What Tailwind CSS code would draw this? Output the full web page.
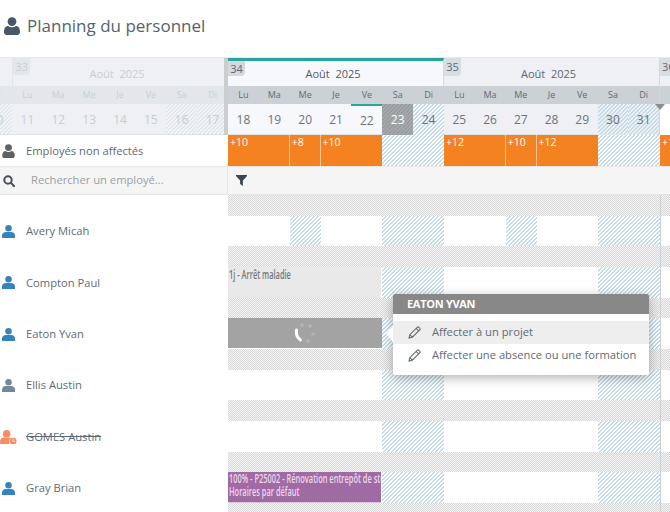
<!DOCTYPE html>
<html lang="fr">
<head>
  <meta charset="UTF-8">
  <title>Planning du personnel</title>
  <script src="https://cdn.jsdelivr.net/npm/@tailwindcss/browser@4"></script>
</head>
<body class="bg-white overflow-hidden font-['Open_Sans',sans-serif] text-[#5f6b75]">
  <div class="relative w-[670px] h-[512px] overflow-hidden">

    <!-- Title -->
    <div class="h-[57px] flex items-center pl-1 pb-[6px] gap-[7px]">
      <svg class="w-4 h-[18px] text-[#4a5766]" viewBox="0 0 16 18" fill="currentColor"><circle cx="8" cy="4.600" r="4.400"/><path d="M0 15c0-4 1.800-6 4.200-6 1 .8 2.300 1.200 3.800 1.200S10.800 9.800 11.800 9c2.400 0 4.200 2 4.200 6 0 2-1.200 3-2.800 3H2.800C1.200 18 0 17 0 15z"/></svg>
      <h1 class="text-[17px] leading-none text-[#56626f]">Planning du personnel</h1>
    </div>

    <!-- Calendar header -->
    <div class="flex h-[78px] border-t border-[#e6e8ea]">
      <div class="w-[224px] shrink-0 overflow-hidden bg-[#eef0f3] text-[#c9ced3]">
        <div class="flex h-[28px] border-l border-[#e2e5e8] ml-3">
          <span class="w-[17px] h-[17px] bg-[#e4e7ea] rounded-br text-[11px] leading-[17px] text-center">33</span>
          <span class="flex-1 text-center text-[11px] leading-[31px] pr-[20px]">Août&nbsp; 2025</span>
        </div>
        <div class="flex h-[18px] bg-[#e4e7ea] text-[9px] leading-[18px] text-center -ml-[19px]">
          <span class="w-[31px] shrink-0">Di</span><span class="w-[30.860px] shrink-0">Lu</span><span class="w-[30.860px] shrink-0">Ma</span><span class="w-[30.860px] shrink-0">Me</span><span class="w-[30.860px] shrink-0">Je</span><span class="w-[30.860px] shrink-0">Ve</span><span class="w-[30.860px] shrink-0">Sa</span><span class="w-[30.860px] shrink-0">Di</span>
        </div>
        <div class="flex h-[31px] text-[12px] leading-[31px] text-center -ml-[19px] border-b border-[#dfe2e5]">
          <span class="w-[31px] shrink-0 bg-[repeating-linear-gradient(135deg,#e2e7eb_0,#e2e7eb_1.200px,#f2f4f6_1.200px,#f2f4f6_2.828px)]">10</span><span class="w-[30.860px] shrink-0">11</span><span class="w-[30.860px] shrink-0">12</span><span class="w-[30.860px] shrink-0">13</span><span class="w-[30.860px] shrink-0">14</span><span class="w-[30.860px] shrink-0">15</span><span class="w-[30.860px] shrink-0 bg-[repeating-linear-gradient(135deg,#e2e7eb_0,#e2e7eb_1.200px,#f2f4f6_1.200px,#f2f4f6_2.828px)]">16</span><span class="w-[30.860px] shrink-0 bg-[repeating-linear-gradient(135deg,#e2e7eb_0,#e2e7eb_1.200px,#f2f4f6_1.200px,#f2f4f6_2.828px)]">17</span>
        </div>
      </div>
      <div class="w-1 shrink-0 bg-[#cbcdce]"></div>

      <!-- Week 34 -->
      <div class="w-[216px] shrink-0 bg-[#f7f8fb]">
        <div class="h-[28px] border-t-[3px] border-[#26a69a] flex border-r border-r-[#d5d9dd]">
          <span class="w-[17px] h-[15px] bg-[#d5d8dc] rounded-br text-[11px] leading-[15px] text-center">34</span>
          <span class="flex-1 text-center text-[11px] leading-[26px] pr-[22px] text-[#4f5b66]">Août&nbsp; 2025</span>
        </div>
        <div class="grid grid-cols-7 h-[18px] bg-[#ccd1d5] text-[9px] leading-[18px] text-center">
          <span>Lu</span><span>Ma</span><span>Me</span><span>Je</span><span>Ve</span><span>Sa</span><span>Di</span>
        </div>
        <div class="grid grid-cols-7 h-[31px] text-[12px] leading-[31px] text-center border-b border-[#dfe2e5] text-[#6a747d]">
          <span>18</span><span>19</span><span>20</span><span>21</span>
          <span class="border-t-2 border-[#26a69a] leading-[29px]">22</span>
          <span class="text-white bg-[repeating-linear-gradient(135deg,#9a9da0_0,#9a9da0_1.200px,#a6a9ac_1.200px,#a6a9ac_2.828px)]">23</span>
          <span class="bg-[repeating-linear-gradient(135deg,#c5dbe8_0,#c5dbe8_1.200px,#f7f8fb_1.200px,#f7f8fb_2.828px)]">24</span>
        </div>
      </div>

      <!-- Week 35 -->
      <div class="w-[216px] shrink-0 bg-[#eef0f4] border-r border-[#d5d9dd]">
        <div class="h-[28px] flex">
          <span class="w-[17px] h-[18px] bg-[#d9dce0] rounded-br text-[11px] leading-[18px] text-center">35</span>
          <span class="flex-1 text-center text-[11px] leading-[32px] pr-[23px] text-[#5c6772]">Août&nbsp; 2025</span>
        </div>
        <div class="grid grid-cols-7 h-[18px] bg-[#ccd1d5] text-[9px] leading-[18px] text-center">
          <span>Lu</span><span>Ma</span><span>Me</span><span>Je</span><span>Ve</span><span>Sa</span><span>Di</span>
        </div>
        <div class="grid grid-cols-7 h-[31px] text-[12px] leading-[31px] text-center border-b border-[#dfe2e5] text-[#6a747d]">
          <span>25</span><span>26</span><span>27</span><span>28</span><span>29</span>
          <span class="bg-[repeating-linear-gradient(135deg,#c5dbe8_0,#c5dbe8_1.200px,#eef0f4_1.200px,#eef0f4_2.828px)]">30</span>
          <span class="bg-[repeating-linear-gradient(135deg,#c5dbe8_0,#c5dbe8_1.200px,#eef0f4_1.200px,#eef0f4_2.828px)]">31</span>
        </div>
      </div>

      <!-- Week 36 -->
      <div class="flex-1 bg-white overflow-hidden">
        <div class="h-[28px] bg-[#eef0f4]"><span class="block w-[17px] h-[18px] bg-[#d9dce0] text-[11px] leading-[18px] pl-[2px]">36</span></div>
        <div class="h-[18px] bg-[#ccd1d5]"></div>
      </div>
    </div>

    <!-- Non assigned row -->
    <div class="flex h-[31px]">
      <div class="w-[228px] shrink-0 flex items-center pt-[1px] pl-[2px] gap-[11px] text-[11.200px]">
        <svg class="w-[13px] h-[14px] text-[#5b6268]" viewBox="0 0 16 18" fill="currentColor"><circle cx="8" cy="4.600" r="4.400"/><path d="M0 15c0-4 1.800-6 4.200-6 1 .8 2.300 1.200 3.800 1.200S10.800 9.800 11.800 9c2.400 0 4.200 2 4.200 6 0 2-1.200 3-2.800 3H2.800C1.200 18 0 17 0 15z"/></svg>
        <span>Employés non affectés</span>
      </div>
      <div class="grid grid-cols-[repeat(14,30.860px)_10px] flex-1 text-white text-[10.500px] leading-[15px]">
        <span class="col-span-2 bg-[#f58220] pl-[2px] border-r border-[#fbc596]">+10</span>
        <span class="bg-[#f58220] pl-[2px] border-r border-[#fbc596]">+8</span>
        <span class="col-span-2 bg-[#f58220] pl-[2px]">+10</span>
        <span class="col-span-2 bg-[repeating-linear-gradient(135deg,#c5dbe8_0,#c5dbe8_1.200px,#fff_1.200px,#fff_2.828px)]"></span>
        <span class="col-span-2 bg-[#f58220] pl-[2px] border-r border-[#fbc596]">+12</span>
        <span class="bg-[#f58220] pl-[2px] border-r border-[#fbc596]">+10</span>
        <span class="col-span-2 bg-[#f58220] pl-[2px]">+12</span>
        <span class="col-span-2 bg-[repeating-linear-gradient(135deg,#c5dbe8_0,#c5dbe8_1.200px,#fff_1.200px,#fff_2.828px)]"></span>
        <span class="bg-[#f58220] pl-[2px] overflow-hidden">+12</span>
      </div>
    </div>

    <!-- Toolbar -->
    <div class="flex h-[29px] bg-[#f5f5f5] border-y border-[#e6e6e6]">
      <div class="w-[228px] shrink-0 flex items-center pl-[3px] gap-[16px] border-r border-[#e6e6e6] text-[11.200px] text-[#9a9fa4]">
        <svg class="w-3 h-3 text-[#4a5058]" viewBox="0 0 12 12" fill="none" stroke="currentColor" stroke-width="2"><circle cx="5" cy="5" r="3.700"/><path d="M8 8l3.200 3.200" stroke-linecap="round"/></svg>
        <span>Rechercher un employé...</span>
      </div>
      <div class="flex items-center pl-2">
        <svg class="w-[11px] h-[11px] text-[#3f464d]" viewBox="0 0 12 12" fill="currentColor"><path d="M0 0h12v1.200L7.500 6v6L4.500 9.800V6L0 1.200z"/></svg>
      </div>
    </div>

    <!-- Employee rows -->
    <div class="flex flex-col">

      <div class="flex h-[51.330px]">
        <div class="w-[228px] shrink-0 flex items-center pt-[22px] pl-[2px] gap-[11px] text-[11.200px]">
          <svg class="w-[13px] h-[13px] text-[#3582c1]" viewBox="0 0 16 16" fill="currentColor"><circle cx="8" cy="4" r="4"/><path d="M0 16v-3c0-3 2-4.500 5-4.500h6c3 0 5 1.500 5 4.500v3z"/></svg>
          <span>Avery Micah</span>
        </div>
        <div class="flex-1 flex flex-col">
          <div class="flex-1 bg-[repeating-linear-gradient(135deg,#d8d8d8_0,#d8d8d8_.707px,#f4f4f4_.707px,#f4f4f4_1.414px)]"></div>
          <div class="grid grid-cols-[repeat(14,30.860px)_10px] h-[30.500px]">
            <span class="col-span-2"></span>
            <span class="bg-[repeating-linear-gradient(135deg,#c5dbe8_0,#c5dbe8_1.200px,#fff_1.200px,#fff_2.828px)]"></span>
            <span class="col-span-2"></span>
            <span class="col-span-2 bg-[repeating-linear-gradient(135deg,#c5dbe8_0,#c5dbe8_1.200px,#fff_1.200px,#fff_2.828px)]"></span>
            <span class="col-span-2"></span>
            <span class="bg-[repeating-linear-gradient(135deg,#c5dbe8_0,#c5dbe8_1.200px,#fff_1.200px,#fff_2.828px)]"></span>
            <span class="col-span-2"></span>
            <span class="col-span-2 bg-[repeating-linear-gradient(135deg,#c5dbe8_0,#c5dbe8_1.200px,#fff_1.200px,#fff_2.828px)]"></span>
          </div>
        </div>
      </div>

      <div class="flex h-[51.330px]">
        <div class="w-[228px] shrink-0 flex items-center pt-[22px] pl-[2px] gap-[11px] text-[11.200px]">
          <svg class="w-[13px] h-[13px] text-[#3582c1]" viewBox="0 0 16 16" fill="currentColor"><circle cx="8" cy="4" r="4"/><path d="M0 16v-3c0-3 2-4.500 5-4.500h6c3 0 5 1.500 5 4.500v3z"/></svg>
          <span>Compton Paul</span>
        </div>
        <div class="flex-1 flex flex-col">
          <div class="flex-1 bg-[repeating-linear-gradient(135deg,#d8d8d8_0,#d8d8d8_.707px,#f4f4f4_.707px,#f4f4f4_1.414px)]"></div>
          <div class="grid grid-cols-[repeat(14,30.860px)_10px] h-[30.500px]">
            <span class="col-span-5 flex items-start bg-[#e9e9e9] mr-[1px] pl-[1px] overflow-hidden whitespace-nowrap"><span class="origin-left scale-x-[.62] text-[12px] leading-[15px] font-semibold text-[#73787c]">1j - Arrêt maladie</span></span>
            <span class="col-span-2 bg-[repeating-linear-gradient(135deg,#c5dbe8_0,#c5dbe8_1.200px,#fff_1.200px,#fff_2.828px)]"></span>
            <span class="col-span-5"></span>
            <span class="col-span-2 bg-[repeating-linear-gradient(135deg,#c5dbe8_0,#c5dbe8_1.200px,#fff_1.200px,#fff_2.828px)]"></span>
          </div>
        </div>
      </div>

      <div class="flex h-[51.330px]">
        <div class="w-[228px] shrink-0 flex items-center pt-[22px] pl-[2px] gap-[11px] text-[11.200px]">
          <svg class="w-[13px] h-[13px] text-[#3582c1]" viewBox="0 0 16 16" fill="currentColor"><circle cx="8" cy="4" r="4"/><path d="M0 16v-3c0-3 2-4.500 5-4.500h6c3 0 5 1.500 5 4.500v3z"/></svg>
          <span>Eaton Yvan</span>
        </div>
        <div class="flex-1 flex flex-col">
          <div class="flex-1 bg-[repeating-linear-gradient(135deg,#d8d8d8_0,#d8d8d8_.707px,#f4f4f4_.707px,#f4f4f4_1.414px)]"></div>
          <div class="grid grid-cols-[repeat(14,30.860px)_10px] h-[30.500px]">
            <span class="col-span-5 bg-[#a3a3a3] pr-[2px] border-b border-white flex items-center justify-center">
              <svg class="w-[24px] h-[24px]" viewBox="0 0 24 24">
                <path d="M4.500 9c-.5 3 0 5.500 1.500 7.500l2.500 2.500" fill="none" stroke="#fff" stroke-width="3" stroke-linecap="round"/>
                <circle cx="10" cy="4" r="1.800" fill="#b5b5b5"/><circle cx="18" cy="5" r="1.800" fill="#b5b5b5"/><circle cx="21" cy="13" r="1.800" fill="#b5b5b5"/><circle cx="16" cy="20" r="1.800" fill="#b5b5b5"/>
              </svg>
            </span>
            <span class="col-span-2 bg-[repeating-linear-gradient(135deg,#c5dbe8_0,#c5dbe8_1.200px,#fff_1.200px,#fff_2.828px)]"></span>
            <span class="col-span-5"></span>
            <span class="col-span-2 bg-[repeating-linear-gradient(135deg,#c5dbe8_0,#c5dbe8_1.200px,#fff_1.200px,#fff_2.828px)]"></span>
          </div>
        </div>
      </div>

      <div class="flex h-[51.330px]">
        <div class="w-[228px] shrink-0 flex items-center pt-[22px] pl-[2px] gap-[11px] text-[11.200px]">
          <svg class="w-[13px] h-[13px] text-[#76869b]" viewBox="0 0 16 16" fill="currentColor"><circle cx="8" cy="4" r="4"/><path d="M0 16v-3c0-3 2-4.500 5-4.500h6c3 0 5 1.500 5 4.500v3z"/></svg>
          <span>Ellis Austin</span>
        </div>
        <div class="flex-1 flex flex-col">
          <div class="flex-1 bg-[repeating-linear-gradient(135deg,#d8d8d8_0,#d8d8d8_.707px,#f4f4f4_.707px,#f4f4f4_1.414px)]"></div>
          <div class="grid grid-cols-[repeat(14,30.860px)_10px] h-[30.500px]">
            <span class="col-span-5"></span>
            <span class="col-span-2 bg-[repeating-linear-gradient(135deg,#c5dbe8_0,#c5dbe8_1.200px,#fff_1.200px,#fff_2.828px)]"></span>
            <span class="col-span-5"></span>
            <span class="col-span-2 bg-[repeating-linear-gradient(135deg,#c5dbe8_0,#c5dbe8_1.200px,#fff_1.200px,#fff_2.828px)]"></span>
          </div>
        </div>
      </div>

      <div class="flex h-[51.330px]">
        <div class="w-[228px] shrink-0 flex items-center pt-[22px] gap-[9px] text-[11.200px]">
          <svg class="w-[17px] h-[14px] text-[#fb8c62]" viewBox="0 0 18 15" fill="currentColor"><circle cx="7" cy="4" r="4"/><path d="M0 15v-3c0-2.500 1.800-4 4.500-4h5c1 0 1.800.2 2.500.6-1.500 1-2.500 2.700-2.500 4.400 0 .7.1 1.400.4 2z"/><circle cx="14" cy="12" r="3.600"/><path d="M14 10v2.200h1.800" stroke="#fff" fill="none" stroke-width="1"/></svg>
          <span class="line-through">GOMES Austin</span>
        </div>
        <div class="flex-1 flex flex-col">
          <div class="flex-1 bg-[repeating-linear-gradient(135deg,#d8d8d8_0,#d8d8d8_.707px,#f4f4f4_.707px,#f4f4f4_1.414px)]"></div>
          <div class="grid grid-cols-[repeat(14,30.860px)_10px] h-[30.500px]">
            <span class="col-span-5"></span>
            <span class="col-span-2 bg-[repeating-linear-gradient(135deg,#c5dbe8_0,#c5dbe8_1.200px,#fff_1.200px,#fff_2.828px)]"></span>
            <span class="col-span-5"></span>
            <span class="col-span-2 bg-[repeating-linear-gradient(135deg,#c5dbe8_0,#c5dbe8_1.200px,#fff_1.200px,#fff_2.828px)]"></span>
          </div>
        </div>
      </div>

      <div class="flex h-[51.330px]">
        <div class="w-[228px] shrink-0 flex items-center pt-[22px] pl-[2px] gap-[11px] text-[11.200px]">
          <svg class="w-[13px] h-[13px] text-[#3582c1]" viewBox="0 0 16 16" fill="currentColor"><circle cx="8" cy="4" r="4"/><path d="M0 16v-3c0-3 2-4.500 5-4.500h6c3 0 5 1.500 5 4.500v3z"/></svg>
          <span>Gray Brian</span>
        </div>
        <div class="flex-1 flex flex-col">
          <div class="flex-1 bg-[repeating-linear-gradient(135deg,#d8d8d8_0,#d8d8d8_.707px,#f4f4f4_.707px,#f4f4f4_1.414px)]"></div>
          <div class="grid grid-cols-[repeat(14,30.860px)_10px] h-[30.500px]">
            <span class="col-span-5 flex items-start bg-[#a06aa3] mr-[1px] pl-[1px] overflow-hidden whitespace-nowrap border-b border-[#d9c3da]"><span class="origin-left scale-x-[.62] text-[12px] leading-[13px] font-semibold text-[#ecd7ee]">100% - P25002 - Rénovation entrepôt de stockage<br>Horaires par défaut</span></span>
            <span class="col-span-2 bg-[repeating-linear-gradient(135deg,#c5dbe8_0,#c5dbe8_1.200px,#fff_1.200px,#fff_2.828px)]"></span>
            <span class="col-span-5"></span>
            <span class="col-span-2 bg-[repeating-linear-gradient(135deg,#c5dbe8_0,#c5dbe8_1.200px,#fff_1.200px,#fff_2.828px)]"></span>
          </div>
        </div>
      </div>

      <div class="ml-[228px] h-[10px] bg-[repeating-linear-gradient(135deg,#d8d8d8_0,#d8d8d8_.707px,#f4f4f4_.707px,#f4f4f4_1.414px)]"></div>
    </div>

    <!-- Current day marker -->
    <div class="absolute left-[660px] top-[195px] bottom-0 w-px bg-[#cfd2d5]"></div>
    <div class="absolute left-[655px] top-[104px] w-0 h-0 border-x-[5px] border-x-transparent border-t-[6px] border-t-[#8d8d8d]"></div>

    <!-- Context menu -->
    <div class="absolute left-[393px] top-[294px] w-[256px] h-[81px] bg-white rounded-[2px] shadow-[0_3px_12px_rgba(0,0,0,.3)]">
      <div class="absolute -left-[7px] top-[32px] w-0 h-0 border-y-[8px] border-y-transparent border-r-[7px] border-r-white"></div>
      <div class="h-[20px] bg-[#888888] rounded-t-[2px] pl-[14px] text-[11px] leading-[20px] font-bold text-white tracking-[-.3px]">EATON YVAN</div>
      <div class="pt-[7px] text-[11.200px] text-[#5f6b75]">
        <div class="h-[23px] bg-[#eeeeee] flex items-center pl-[15px] gap-[11px]">
          <svg class="w-[13px] h-[13px]" viewBox="0 0 12 12" fill="none" stroke="#5f6b75" stroke-width="1"><path d="M1 11l.7-3L8.500 1.200c.5-.5 1.200-.5 1.600 0l.7.7c.5.5.5 1.100 0 1.600L4 10.300zM7.500 2.200l2.300 2.300M1.700 8l2.300 2.300"/></svg>
          <span>Affecter à un projet</span>
        </div>
        <div class="h-[23px] flex items-center pl-[15px] gap-[11px]">
          <svg class="w-[13px] h-[13px]" viewBox="0 0 12 12" fill="none" stroke="#5f6b75" stroke-width="1"><path d="M1 11l.7-3L8.500 1.200c.5-.5 1.200-.5 1.600 0l.7.7c.5.5.5 1.100 0 1.600L4 10.300zM7.500 2.200l2.300 2.300M1.700 8l2.300 2.300"/></svg>
          <span>Affecter une absence ou une formation</span>
        </div>
      </div>
    </div>
  </div>
</body>
</html>
